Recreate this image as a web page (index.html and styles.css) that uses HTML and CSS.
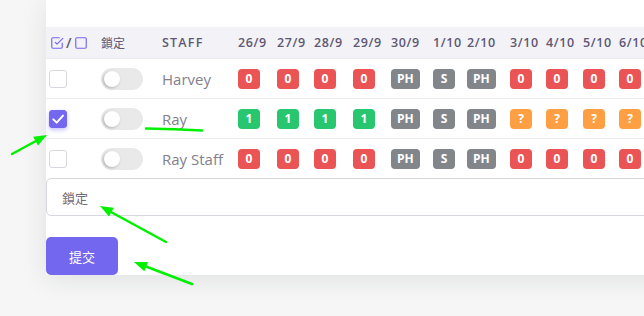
FILE: index.html
```html
<!DOCTYPE html>
<html lang="zh-Hant">
<head>
<meta charset="utf-8">
<title>Staff lock</title>
<link rel="stylesheet" href="styles.css">
</head>
<body>
<div class="page">
  <div class="card">
    <div class="grid head">
      <div class="cell c-check">
        <svg class="hicon" viewBox="0 0 24 24"><polyline points="9 11 12 14 22 4"/><path d="M21 12v7a2 2 0 0 1-2 2H5a2 2 0 0 1-2-2V5a2 2 0 0 1 2-2h11"/></svg>
        <span class="slash">/</span>
        <svg class="hicon" viewBox="0 0 24 24"><rect x="3" y="3" width="18" height="18" rx="2" ry="2"/></svg>
      </div>
      <div class="cell cjk">鎖定</div>
      <div class="cell bold staff">STAFF</div>
      <div class="cell bold">26/9</div>
      <div class="cell bold">27/9</div>
      <div class="cell bold">28/9</div>
      <div class="cell bold">29/9</div>
      <div class="cell bold">30/9</div>
      <div class="cell bold">1/10</div>
      <div class="cell bold">2/10</div>
      <div class="cell bold">3/10</div>
      <div class="cell bold">4/10</div>
      <div class="cell bold">5/10</div>
      <div class="cell bold">6/10</div>
    </div>

    <div class="grid row">
      <div class="cell c-check"><span class="box"></span></div>
      <div class="cell"><span class="toggle"><span class="knob"></span></span></div>
      <div class="cell name">Harvey</div>
      <div class="cell"><span class="badge red">0</span></div>
      <div class="cell"><span class="badge red">0</span></div>
      <div class="cell"><span class="badge red">0</span></div>
      <div class="cell"><span class="badge red">0</span></div>
      <div class="cell"><span class="badge gray">PH</span></div>
      <div class="cell"><span class="badge gray">S</span></div>
      <div class="cell"><span class="badge gray">PH</span></div>
      <div class="cell"><span class="badge red">0</span></div>
      <div class="cell"><span class="badge red">0</span></div>
      <div class="cell"><span class="badge red">0</span></div>
      <div class="cell"><span class="badge red">0</span></div>
    </div>

    <div class="grid row">
      <div class="cell c-check"><span class="box checked"><svg viewBox="0 0 24 24"><polyline points="5 12.5 10 17.5 19.5 7"/></svg></span></div>
      <div class="cell"><span class="toggle"><span class="knob"></span></span></div>
      <div class="cell name">Ray</div>
      <div class="cell"><span class="badge green">1</span></div>
      <div class="cell"><span class="badge green">1</span></div>
      <div class="cell"><span class="badge green">1</span></div>
      <div class="cell"><span class="badge green">1</span></div>
      <div class="cell"><span class="badge gray">PH</span></div>
      <div class="cell"><span class="badge gray">S</span></div>
      <div class="cell"><span class="badge gray">PH</span></div>
      <div class="cell"><span class="badge orange">?</span></div>
      <div class="cell"><span class="badge orange">?</span></div>
      <div class="cell"><span class="badge orange">?</span></div>
      <div class="cell"><span class="badge orange">?</span></div>
    </div>

    <div class="grid row">
      <div class="cell c-check"><span class="box"></span></div>
      <div class="cell"><span class="toggle"><span class="knob"></span></span></div>
      <div class="cell name">Ray Staff</div>
      <div class="cell"><span class="badge red">0</span></div>
      <div class="cell"><span class="badge red">0</span></div>
      <div class="cell"><span class="badge red">0</span></div>
      <div class="cell"><span class="badge red">0</span></div>
      <div class="cell"><span class="badge gray">PH</span></div>
      <div class="cell"><span class="badge gray">S</span></div>
      <div class="cell"><span class="badge gray">PH</span></div>
      <div class="cell"><span class="badge red">0</span></div>
      <div class="cell"><span class="badge red">0</span></div>
      <div class="cell"><span class="badge red">0</span></div>
      <div class="cell"><span class="badge red">0</span></div>
    </div>

    <div class="field">鎖定</div>

    <button class="submit">提交</button>
  </div>
</div>

<svg class="notes" viewBox="0 0 644 316" width="644" height="316">
  <path class="ln" d="M146 128.5 Q175 129 202 130.5"/>
  <line class="ln" x1="12" y1="154" x2="36" y2="141"/>
  <polygon class="hd" points="47,135 38,145.6 33.2,136.8"/>
  <line class="ln" x1="166" y1="242" x2="111" y2="212"/>
  <polygon class="hd" points="100,206 113.8,207.8 109,216.6"/>
  <line class="ln" x1="192" y1="284" x2="146" y2="266.5"/>
  <polygon class="hd" points="134,262 148,261.9 144.4,271.3"/>
</svg>
</body>
</html>
```

FILE: styles.css
```css
html, body {
  margin: 0;
  padding: 0;
}
body {
  width: 644px;
  height: 316px;
  overflow: hidden;
  background: #f6f6f6;
  font-family: "Open Sans", "Noto Sans CJK TC", sans-serif;
  color: #6e6b7b;
  position: relative;
}
.page {
  padding-left: 46px;
}
.card {
  width: 640px;
  background: #fff;
  padding-top: 27px;
  box-shadow: 0 4px 24px 0 rgba(34, 41, 47, 0.1);
}
.grid {
  display: grid;
  grid-template-columns: 55px 61px 76px 39px 37px 39px 38px 42px 34px 43px 36px 37px 36px 50px;
  align-items: center;
  box-sizing: border-box;
}
.head {
  height: 31px;
  background: #f3f2f7;
  font-size: 12.5px;
  color: #5e5873;
}
.head .bold {
  font-weight: 600;
  letter-spacing: 0.6px;
}
.head .staff {
  letter-spacing: 1.2px;
}
.head .cjk {
  font-size: 12px;
  color: #5e5873;
}
.row {
  height: 40px;
  border-top: 1px solid #ebe9f1;
}
.cell {
  white-space: nowrap;
  display: flex;
  align-items: center;
}
.c-check {
  padding-left: 3px;
}
.head .c-check {
  padding-left: 4px;
}
.hicon {
  width: 14px;
  height: 14px;
  fill: none;
  stroke: #7367f0;
  stroke-width: 2;
  stroke-linecap: round;
  stroke-linejoin: round;
}
.slash {
  font-size: 14px;
  color: #5e5873;
  margin: 0 3px 0 2px;
  font-weight: 600;
}
.box {
  width: 18px;
  height: 18px;
  box-sizing: border-box;
  border: 1px solid #d8d6de;
  border-radius: 3px;
  background: #fff;
  display: flex;
  align-items: center;
  justify-content: center;
}
.box.checked {
  background: #7367f0;
  border-color: #7367f0;
  box-shadow: 0 2px 4px 0 rgba(115, 103, 240, 0.4);
}
.box svg {
  width: 16px;
  height: 16px;
  fill: none;
  stroke: #fff;
  stroke-width: 3;
  stroke-linecap: round;
  stroke-linejoin: round;
}
.toggle {
  width: 42px;
  height: 22px;
  border-radius: 11px;
  background: #e9e9ea;
  display: flex;
  align-items: center;
  padding-left: 3px;
  box-sizing: border-box;
}
.knob {
  width: 16px;
  height: 16px;
  border-radius: 50%;
  background: #fff;
  box-shadow: -1px 1px 3px rgba(0, 0, 0, 0.25);
}
.name {
  font-size: 15px;
  color: #82808c;
}
.badge {
  display: inline-block;
  height: 20px;
  line-height: 20px;
  min-width: 22px;
  box-sizing: border-box;
  padding: 0 6px;
  border-radius: 4px;
  color: #fff;
  font-size: 12px;
  font-weight: 700;
  text-align: center;
}
.red { background: #ea5455; }
.green { background: #28c76f; }
.gray { background: #82868b; }
.orange { background: #ff9f43; }
.field {
  height: 38px;
  box-sizing: border-box;
  border: 1px solid #d8d6de;
  border-radius: 5px;
  padding-left: 15px;
  display: flex;
  align-items: center;
  font-size: 13px;
  color: #6e6b7b;
  margin-bottom: 21px;
}
.submit {
  display: block;
  width: 72px;
  height: 38px;
  border: 0;
  border-radius: 5px;
  background: #7367f0;
  color: #fff;
  font-family: "Noto Sans CJK TC", sans-serif;
  font-size: 13px;
  padding: 0;
}
.notes {
  position: absolute;
  left: 0;
  top: 0;
  pointer-events: none;
}
.ln {
  fill: none;
  stroke: #00f000;
  stroke-width: 2.5;
  stroke-linecap: round;
}
.hd {
  fill: #00f000;
}
```
